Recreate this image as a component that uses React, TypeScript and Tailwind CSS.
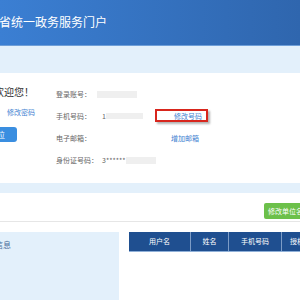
import React from "react";

export default function App() {
  return (
    <div
      className="w-[300px] h-[300px] overflow-hidden bg-[#e3f0fb] flex flex-col"
      style={{ fontFamily: '"Noto Sans CJK SC", "Noto Sans", sans-serif' }}
    >
      {/* header */}
      <div className="h-[46px] shrink-0 bg-gradient-to-r from-[#3b7fd3] to-[#2f66ae] border-b border-[#6f9fd8] flex">
        <div className="mt-[15px] ml-[-1px] text-[12px] leading-[14px] text-white whitespace-nowrap">
          省统一政务服务门户
        </div>
      </div>
      {/* light band */}
      <div className="h-[27px] shrink-0" />
      {/* user card */}
      <div className="h-[110px] shrink-0 bg-white flex">
        <div className="w-[56px] shrink-0 flex flex-col">
          <div className="mt-[12px] ml-[-6px] h-[14px] text-[10px] leading-[14px] text-[#333] whitespace-nowrap">
            欢迎您！
          </div>
          <div className="mt-[8px] ml-[7px] text-[7px] leading-[10px] text-[#3f82d1] whitespace-nowrap">
            修改密码
          </div>
          <div className="mt-[10px] w-[17px] h-[15px] bg-[#3a8ee0] rounded-r-[3px] flex items-center overflow-hidden">
            <span className="ml-[-3px] text-[8px] leading-[10px] text-white whitespace-nowrap">位</span>
          </div>
        </div>
        <div className="flex flex-col pt-[10px] text-[7px] text-[#666]">
          <div className="h-[22px] flex items-center">
            <span className="w-[41px] shrink-0 whitespace-nowrap">登录账号：</span>
            <span className="w-[40px] h-[7px] bg-[#efefef]" />
          </div>
          <div className="h-[22px] flex items-center">
            <span className="w-[46px] shrink-0 whitespace-nowrap">手机号码：</span>
            <span className="leading-[10px]">1</span>
            <span className="w-[37px] h-[6px] bg-[#efefef]" />
            <span className="relative ml-[31px] leading-[10px] text-[#3f82d1] whitespace-nowrap">
              修改号码
              <span className="absolute left-[-19px] right-[-6px] top-[-2px] bottom-[-1px] border-2 border-[#d8261d] shadow-[2px_2px_2px_rgba(0,0,0,0.3)]" />
            </span>
          </div>
          <div className="h-[22px] flex items-center">
            <span className="w-[115px] shrink-0 whitespace-nowrap">电子邮箱：</span>
            <span className="leading-[10px] text-[#3f82d1] whitespace-nowrap">增加邮箱</span>
          </div>
          <div className="h-[22px] flex items-center">
            <span className="w-[46px] shrink-0 whitespace-nowrap">身份证号码：</span>
            <span className="leading-[10px] whitespace-nowrap">3******</span>
            <span className="w-[30px] h-[7px] bg-[#efefef]" />
          </div>
        </div>
      </div>
      {/* gap */}
      <div className="h-[10px] shrink-0" />
      {/* lower section */}
      <div className="flex-1 bg-white flex flex-col">
        <div className="h-[29px] shrink-0 border-b border-[#e6e6e6] flex items-start justify-end">
          <div className="mt-[10px] ml-auto w-[36px] h-[16px] bg-[#6cc04a] rounded-l-[2px] flex items-center overflow-hidden">
            <span className="ml-[4px] text-[7px] leading-[10px] text-white whitespace-nowrap">修改单位名称</span>
          </div>
        </div>
        <div className="h-[10px] shrink-0" />
        <div className="flex-1 flex gap-[10px]">
          <div className="w-[119px] shrink-0 bg-[#e3f0fb]">
            <div className="mt-[8px] ml-[-5px] text-[8px] leading-[10px] text-[#4a6c9a] whitespace-nowrap">
              信息
            </div>
          </div>
          <div className="flex-1 flex flex-col">
            <div className="h-[20px] bg-[#1f4f90] border-b border-[#8fb0d8] flex text-[7px] text-white">
              <div className="w-[62px] shrink-0 flex items-center justify-center border-r border-[#7d9cc6]">用户名</div>
              <div className="w-[38px] shrink-0 flex items-center justify-center border-r border-[#7d9cc6]">姓名</div>
              <div className="w-[53px] shrink-0 flex items-center justify-center border-r border-[#7d9cc6]">手机号码</div>
              <div className="flex-1 flex items-center pl-[8px] whitespace-nowrap overflow-hidden">授权</div>
            </div>
          </div>
        </div>
      </div>
    </div>
  );
}
